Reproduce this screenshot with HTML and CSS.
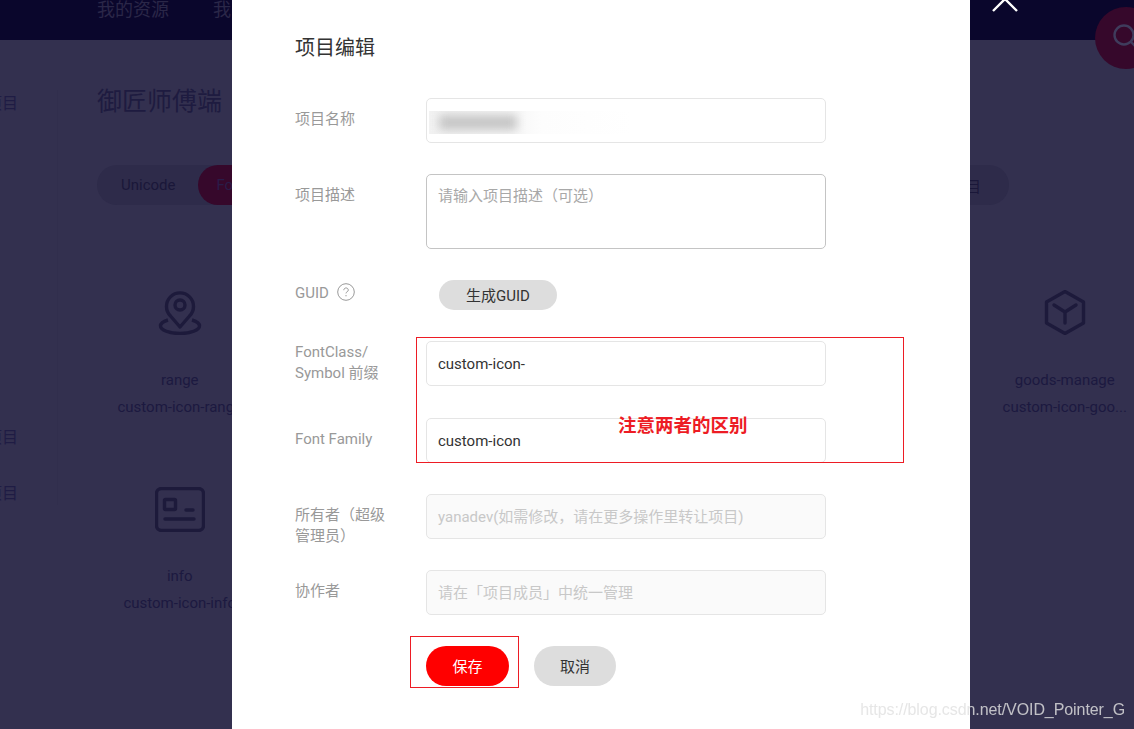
FILE: index.html
```html
<!DOCTYPE html>
<html lang="zh-CN">
<head>
    <meta charset="UTF-8">
    <meta name="viewport" content="width=device-width, initial-scale=1.0">
    <title>项目编辑</title>
    <link rel="stylesheet" href="styles.css">
</head>
<body>

    <!-- Page behind the dialog, already dimmed -->
    <div class="page">
        <header class="topbar">
            <a class="nav-link">我的资源</a>
            <a class="nav-link">我的项目</a>
        </header>
        <div class="search-round">
            <svg width="62" height="62" viewBox="0 0 62 62" fill="none" stroke="#3f3c5c" stroke-width="2.4">
                <circle cx="29" cy="28" r="9.5"/>
                <path d="M36 35l6 6"/>
            </svg>
        </div>

        <div class="content">
            <aside class="sidebar">
                <div class="side-item side-first">项目</div>
                <div class="side-item side-second">项目</div>
                <div class="side-item side-third">项目</div>
            </aside>
            <main class="main">
                <h1 class="project-title">御匠师傅端</h1>
                <div class="tabs">
                    <span class="tab">Unicode</span>
                    <span class="tab tab-active">Font class</span>
                    <span class="tab-more">项目</span>
                </div>
                <div class="icon-grid">
                    <div class="icon-card">
                        <svg class="glyph" viewBox="0 0 50 45" fill="none" stroke="#1d1a3b" stroke-width="3.4" stroke-linejoin="round">
                            <path d="M25 37L15.5 26A13.5 13.5 0 1 1 34.5 26z"/>
                            <circle cx="25" cy="15" r="5"/>
                            <path d="M13 30C8 31.5 5.5 33.5 5.5 36c0 4 9 7.5 19.5 7.5S44.5 40 44.5 36c0-2.5-2.5-4.5-7.5-6"/>
                        </svg>
                        <div class="icon-name">range</div>
                        <div class="icon-class">custom-icon-range</div>
                    </div>
                    <div class="icon-card"></div>
                    <div class="icon-card"></div>
                    <div class="icon-card"></div>
                    <div class="icon-card"></div>
                    <div class="icon-card">
                        <div class="glyph"></div>
                        <div class="icon-name">&nbsp;</div>
                        <div class="icon-class">custom-icon-ri...</div>
                    </div>
                    <div class="icon-card">
                        <svg class="glyph" viewBox="0 0 50 45" fill="none" stroke="#1d1a3b" stroke-width="3.4" stroke-linejoin="round" stroke-linecap="round">
                            <path d="M25 1.5L43.5 12v21L25 43.5 6.5 33V12z"/>
                            <path d="M14 15l11 7 11-7M25 22v11"/>
                        </svg>
                        <div class="icon-name">goods-manage</div>
                        <div class="icon-class">custom-icon-goo...</div>
                    </div>
                    <div class="icon-card">
                        <svg class="glyph glyph-tight" viewBox="0 0 50 45" fill="none" stroke="#1d1a3b" stroke-width="3.4" stroke-linejoin="round">
                            <rect x="1.5" y="1.5" width="47" height="42" rx="5"/>
                            <rect x="9.5" y="12.5" width="11" height="10" rx="1"/>
                            <path d="M31 23h7M10 32h29" stroke-linecap="round"/>
                        </svg>
                        <div class="icon-name">info</div>
                        <div class="icon-class">custom-icon-info</div>
                    </div>
                </div>
            </main>
        </div>
    </div>

    <!-- Close button of the dialog -->
    <svg class="close-x" width="26" height="14" viewBox="0 0 26 14" fill="none" stroke="#fff" stroke-width="2.4">
        <path d="M1 13L13 1l12 12"/>
    </svg>

    <!-- Dialog -->
    <div class="dialog">
        <h2 class="dialog-title">项目编辑</h2>
        <div class="form">
            <div class="form-row">
                <label class="form-label">项目名称</label>
                <div class="input input-name">
                    <span class="blur-clip"><span class="blur-blob"></span></span>
                </div>
            </div>
            <div class="form-row row-desc">
                <label class="form-label">项目描述</label>
                <div class="input textarea placeholder">请输入项目描述（可选）</div>
            </div>
            <div class="form-row row-guid">
                <label class="form-label">GUID
                    <svg class="help" width="18" height="18" viewBox="0 0 18 18" fill="none" stroke="#999">
                        <circle cx="9" cy="9" r="8.3"/>
                        <path d="M6.8 7.2c0-3 4.5-3 4.5 0 0 1.5-2.3 1.5-2.3 3.200M9 12v1.3"/>
                    </svg>
                </label>
                <button class="btn-guid">生成GUID</button>
            </div>
            <div class="form-row row-prefix">
                <label class="form-label">FontClass/<br>Symbol 前缀</label>
                <div class="input">custom-icon-</div>
            </div>
            <div class="form-row row-family">
                <label class="form-label">Font Family</label>
                <div class="input">custom-icon</div>
            </div>
            <div class="form-row">
                <label class="form-label">所有者（超级管理员）</label>
                <div class="input input-disabled">yanadev(如需修改，请在更多操作里转让项目)</div>
            </div>
            <div class="form-row">
                <label class="form-label">协作者</label>
                <div class="input input-disabled">请在「项目成员」中统一管理</div>
            </div>
            <div class="form-actions">
                <button class="btn btn-save">保存</button>
                <button class="btn btn-cancel">取消</button>
            </div>
        </div>
    </div>

    <!-- Red annotations drawn on the screenshot -->
    <div class="mark mark-fields"></div>
    <div class="mark mark-save"></div>
    <div class="mark-text">注意两者的区别</div>

    <div class="watermark">https://blog.csdn.net/VOID_Pointer_G</div>

</body>
</html>
```
FILE: styles.css
```css
/* Basic Styling */
html, body {
    height: 100%;
}

body {
    margin: 0;
    overflow: hidden;
    position: relative;
    font-family: Roboto, "Noto Sans CJK SC", sans-serif;
    font-size: 15px;
    text-spacing-trim: space-all;
    background-color: #33304f;
}

/* Page behind the dialog */
.page {
    height: 100%;
    overflow: hidden;
    color: #1c1940;
}

.topbar {
    display: flex;
    gap: 44px;
    height: 40px;
    padding-left: 97px;
    background-color: #0a062c;
    font-size: 18px;
    line-height: 20px;
    color: #2a2748;
}

.search-round {
    position: absolute;
    left: 1095px;
    top: 7px;
    width: 62px;
    height: 62px;
    border-radius: 50%;
    background-color: #36082b;
}

.content {
    display: flex;
    height: 465px;
}

.sidebar {
    flex: none;
    align-self: flex-start;
    width: 72px;
    height: 415px;
    box-sizing: border-box;
    margin: 50px 0 0 -14px;
    border-right: 1px solid #312e4d;
    font-size: 16px;
}

.side-item {
    line-height: 24px;
    color: #1f1c44;
}

.side-first {
    margin-top: 2px;
}

.side-second {
    margin-top: 310px;
}

.side-third {
    margin-top: 32px;
}

.main {
    flex: none;
    width: 1040px;
    margin-left: 39px;
}

.project-title {
    margin: 45px 0 0;
    font-size: 25px;
    font-weight: 400;
    line-height: 34px;
    color: #1e1b40;
}

.tabs {
    display: flex;
    align-items: center;
    width: 912px;
    height: 40px;
    margin-top: 46px;
    border-radius: 20px;
    background-color: #2e2b4a;
}

.tab {
    padding: 0 23px 0 24px;
    line-height: 40px;
    color: #1a1739;
}

.tab-active {
    padding-left: 18px;
    border-radius: 20px;
    background-color: #36082b;
    color: #2a1c48;
}

.tab-more {
    margin-left: auto;
    margin-right: 28px;
    color: #1a1739;
}

/* Icon list */
.icon-grid {
    display: grid;
    grid-template-columns: repeat(7, 147.5px);
    margin-left: 9px;
    margin-top: 85px;
}

.icon-card {
    height: 197px;
    display: flex;
    flex-direction: column;
    align-items: center;
}

.glyph {
    width: 50px;
    height: 45px;
    margin-bottom: 33px;
}

.glyph-tight {
    margin-bottom: 32px;
}

.icon-name {
    line-height: 24px;
}

.icon-class {
    margin-top: 3px;
    line-height: 24px;
    white-space: nowrap;
}

.close-x {
    position: absolute;
    left: 992px;
    top: -2px;
}

/* Dialog */
.dialog {
    position: absolute;
    left: 232px;
    top: 0;
    bottom: 0;
    width: 738px;
    box-sizing: border-box;
    padding: 34px 63px 0;
    background-color: #fff;
}

.dialog-title {
    margin: 0 0 36px;
    font-size: 20px;
    font-weight: 400;
    line-height: 28px;
    color: #333;
}

.form-row {
    display: flex;
    height: 45px;
    margin-bottom: 31px;
}

.row-desc {
    height: 75px;
}

.row-guid {
    height: 30px;
}

.row-family {
    margin-top: 32px;
}

.form-label {
    flex: none;
    width: 100px;
    margin-right: 31px;
    padding-top: 11px;
    line-height: 21px;
    color: #999;
}

.row-guid .form-label {
    padding-top: 3px;
}

.row-prefix .form-label {
    padding-top: 1px;
}

.input {
    flex: none;
    width: 400px;
    height: 45px;
    box-sizing: border-box;
    padding: 0 11px;
    border: 1px solid #e5e5e5;
    border-radius: 5px;
    line-height: 45px;
    color: #333;
    overflow: hidden;
}

.input-name {
    position: relative;
}

/* The name was blurred out in the screenshot */
.blur-clip {
    position: absolute;
    left: 2px;
    top: 12px;
    width: 204px;
    height: 23px;
    overflow: hidden;
    background: linear-gradient(90deg, #f2f2f2, #f6f6f6 40%, #fdfdfd 55%, #fff);
}

.blur-blob {
    position: absolute;
    left: 10px;
    top: 4px;
    width: 78px;
    height: 15px;
    background-color: #c6c6c6;
    filter: blur(5px);
}

.textarea {
    height: 75px;
    border-color: #c4c4c4;
    line-height: 42px;
}

.placeholder {
    color: #a8a8a8;
}

.input-disabled {
    background-color: #fafafa;
    color: #c8c8c8;
}

.help {
    margin-left: 4px;
    vertical-align: -3px;
}

.btn-guid {
    align-self: flex-start;
    width: 118px;
    height: 30px;
    margin-left: 13px;
    padding: 0 0 2px;
    border: none;
    border-radius: 15px;
    background-color: #ddd;
    font: inherit;
    color: #333;
}

.form-actions {
    display: flex;
    gap: 25px;
    padding-left: 131px;
}

.btn {
    width: 83px;
    height: 40px;
    padding: 0 0 2px;
    border: none;
    border-radius: 20px;
    font: inherit;
}

.btn-save {
    background-color: #f00;
    color: #fff;
}

.btn-cancel {
    width: 82px;
    background-color: #ddd;
    color: #333;
}

/* Annotations */
.mark {
    position: absolute;
    box-sizing: border-box;
    border: 1px solid #ed1c24;
}

.mark-fields {
    left: 416px;
    top: 337px;
    width: 488px;
    height: 126px;
}

.mark-save {
    left: 410px;
    top: 636px;
    width: 109px;
    height: 52px;
}

.mark-text {
    position: absolute;
    left: 618px;
    top: 413px;
    font-size: 18.5px;
    font-weight: 700;
    line-height: 26px;
    color: #ed1c24;
}

.watermark {
    position: absolute;
    right: 9px;
    top: 699px;
    font-family: "Liberation Sans", sans-serif;
    font-size: 16px;
    letter-spacing: -0.08px;
    line-height: 22px;
    color: rgba(224, 224, 224, 0.82);
    filter: blur(0.3px);
}
```
